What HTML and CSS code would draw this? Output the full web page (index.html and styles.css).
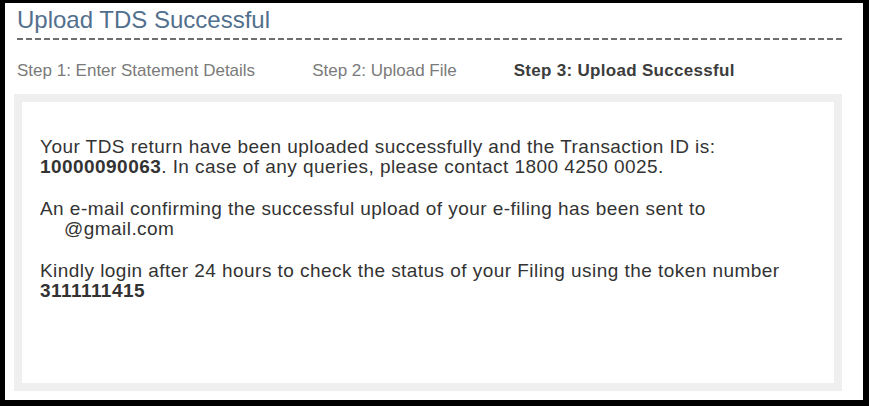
FILE: index.html
```html
<!DOCTYPE html>
<html lang="en">
<head>
    <meta charset="UTF-8">
    <meta name="viewport" content="width=device-width, initial-scale=1.0">
    <title>Upload TDS Successful</title>
    <link rel="stylesheet" href="styles.css">
</head>
<body>
    <div class="frame">
        <h1 class="title">Upload TDS Successful</h1>

        <!-- langkah-langkah upload -->
        <div class="steps">
            <span class="step step1">Step 1: Enter Statement Details</span>
            <span class="step step2">Step 2: Upload File</span>
            <span class="step active">Step 3: Upload Successful</span>
        </div>

        <div class="result-box">
            <p>Your TDS return have been uploaded successfully and the Transaction ID is: <b>10000090063</b>. In case of any queries, please contact 1800 4250 0025.</p>
            <p>An e-mail confirming the successful upload of your e-filing has been sent to <span class="mail"><span class="hidden-mail"></span>@gmail.com</span></p>
            <p>Kindly login after 24 hours to check the status of your Filing using the token number <b>3111111415</b></p>
        </div>
    </div>
</body>
</html>
```

FILE: styles.css
```css
body {
    margin: 0;
    background: #000;
    font-family: "Liberation Sans", Arial, sans-serif;
}

.frame {
    margin: 3px 6px 0 5px;
    height: 397px;
    padding: 0 21px 0 9px;
    background: #fff;
    box-sizing: border-box;
}

.title {
    margin: 0 0 0 3px;
    padding: 3px 0 6px;
    font-size: 24px;
    font-weight: normal;
    line-height: 28px;
    color: #52708e;
    background: repeating-linear-gradient(to right, #6e6e6e 0 6px, transparent 6px 9px) left bottom / 100% 2px no-repeat;
}

.steps {
    display: flex;
    padding: 21px 0 0 3px;
    height: 33px;
    font-size: 17px;
    color: #7a7a7a;
}

.step1,
.step2 {
    margin-right: 57px;
}

.active {
    font-weight: bold;
    color: #3c3c3c;
    letter-spacing: 0.3px;
}

.result-box {
    border: 8px solid #efefef;
    padding: 35px 18px 82px;
    font-size: 19px;
    line-height: 20px;
    letter-spacing: 0.45px;
    color: #333;
}

.result-box p {
    margin: 0 0 22px;
}

.result-box p:last-child {
    margin-bottom: 0;
}

.mail {
    white-space: nowrap;
}

.hidden-mail {
    display: inline-block;
    width: 24px;
}
```
